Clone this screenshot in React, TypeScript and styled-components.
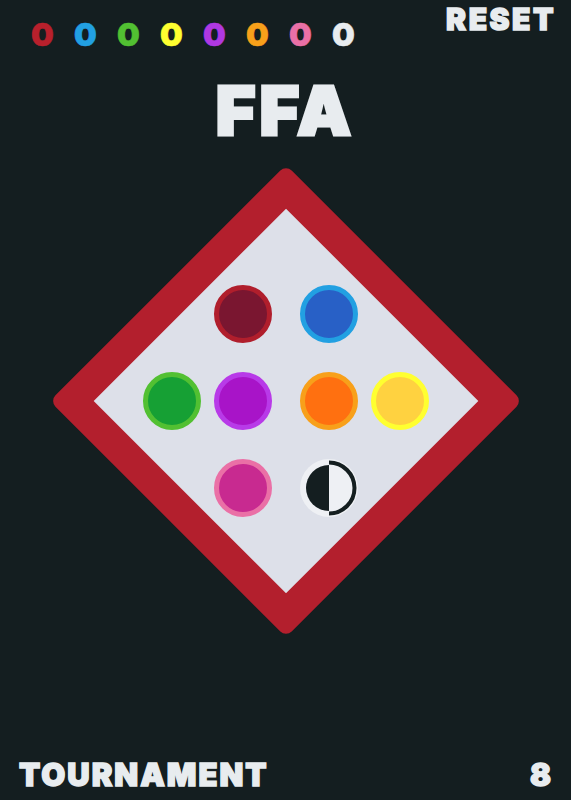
import React from 'react';
import styled, { createGlobalStyle } from 'styled-components';

const bg = '#141e20';
const red = '#b31f2d';
const paper = '#dde0e9';
const light = '#e8ecef';

const GlobalStyle = createGlobalStyle`
  html, body {
    margin: 0;
    padding: 0;
    background: ${bg};
  }
  body {
    font-family: Inter, 'Noto Sans', sans-serif;
    font-weight: 900;
  }
`;

const Screen = styled.div`
  height: 100vh;
  display: flex;
  flex-direction: column;
  color: ${light};
  overflow: hidden;
`;

/* heavier look than the installed fonts give by themselves */
const Heavy = styled.span<{ $w?: number }>`
  -webkit-text-stroke: ${(p) => p.$w ?? 1.4}px currentColor;
  paint-order: stroke fill;
`;

const TopBar = styled.div`
  display: flex;
  justify-content: space-between;
  align-items: flex-start;
  padding: 4px 15px 0 31px;
`;

const Scores = styled.div`
  display: flex;
  gap: 23px;
  margin-top: 15px;
`;

const Score = styled(Heavy)<{ $c: string }>`
  color: ${(p) => p.$c};
  font-size: 32px;
  line-height: 1;
  width: 20px;
  text-align: center;
`;

const Reset = styled.button`
  background: none;
  border: none;
  padding: 0;
  color: ${light};
  font: inherit;
  font-size: 30px;
  line-height: 1;
  letter-spacing: 2.5px;
  cursor: pointer;
`;

const Title = styled.h1`
  margin: 25px 0 0;
  text-align: center;
  font-size: 68px;
  font-weight: 900;
  line-height: 1;
  letter-spacing: 4px;
`;

const Board = styled.div`
  position: relative;
  width: 465px;
  height: 465px;
  margin: 24px auto 0;
  display: flex;
  flex-direction: column;
  justify-content: center;
  gap: 29px;

  &::before {
    content: '';
    position: absolute;
    left: 50%;
    top: 50%;
    width: 272px;
    height: 272px;
    margin: -167px 0 0 -167px;
    background: ${paper};
    border: 31px solid ${red};
    border-radius: 8px;
    transform: rotate(45deg);
  }
`;

const Row = styled.div`
  position: relative;
  display: flex;
  justify-content: center;
  gap: 28px;
`;

const Pair = styled.div`
  display: flex;
  gap: 13px;
`;

const Chip = styled.button<{ $fill: string; $ring: string }>`
  width: 58px;
  height: 58px;
  box-sizing: border-box;
  border-radius: 50%;
  border: 5px solid ${(p) => p.$ring};
  background: ${(p) => p.$fill};
  padding: 0;
  cursor: pointer;
`;

const ContrastChip = styled.button`
  width: 58px;
  height: 58px;
  padding: 0;
  border: none;
  background: none;
  cursor: pointer;
  display: flex;
`;

const BottomBar = styled.div`
  margin-top: auto;
  display: flex;
  justify-content: space-between;
  align-items: flex-end;
  padding: 0 18px 10px 19px;
  font-size: 31px;
  line-height: 1;
  letter-spacing: 2px;
`;

const scoreColors = ['#b8202c', '#22a0e2', '#52c032', '#ffff30', '#b038e2', '#f8a01a', '#ea70a6', light];

const chips = {
  red: { fill: '#7a1630', ring: '#b01e2c' },
  blue: { fill: '#2860c6', ring: '#22a0e2' },
  green: { fill: '#16a034', ring: '#52c032' },
  purple: { fill: '#a814c8', ring: '#b83ae8' },
  orange: { fill: '#ff7010', ring: '#f8a01a' },
  yellow: { fill: '#ffd240', ring: '#ffff30' },
  pink: { fill: '#c82a90', ring: '#ea70a6' },
};

function Contrast() {
  return (
    <ContrastChip aria-label="contrast">
      <svg width="58" height="58" viewBox="0 0 58 58">
        <circle cx="29" cy="29" r="29" fill="#eef0f4" />
        <path d="M29 6 A23 23 0 0 0 29 52 Z" fill="#141e20" />
        <path d="M29 3.5 A25.5 25.5 0 0 1 29 54.5" fill="none" stroke="#141e20" strokeWidth="4" />
      </svg>
    </ContrastChip>
  );
}

export default function App() {
  return (
    <>
      <GlobalStyle />
      <Screen>
        <TopBar>
          <Scores>
            {scoreColors.map((c, i) => (
              <Score key={i} $c={c} $w={0.6}>0</Score>
            ))}
          </Scores>
          <Reset>
            <Heavy>RESET</Heavy>
          </Reset>
        </TopBar>
        <Title>
          <Heavy $w={3}>FFA</Heavy>
        </Title>
        <Board>
          <Row>
            <Chip $fill={chips.red.fill} $ring={chips.red.ring} />
            <Chip $fill={chips.blue.fill} $ring={chips.blue.ring} />
          </Row>
          <Row>
            <Pair>
              <Chip $fill={chips.green.fill} $ring={chips.green.ring} />
              <Chip $fill={chips.purple.fill} $ring={chips.purple.ring} />
            </Pair>
            <Pair>
              <Chip $fill={chips.orange.fill} $ring={chips.orange.ring} />
              <Chip $fill={chips.yellow.fill} $ring={chips.yellow.ring} />
            </Pair>
          </Row>
          <Row>
            <Chip $fill={chips.pink.fill} $ring={chips.pink.ring} />
            <Contrast />
          </Row>
        </Board>
        <BottomBar>
          <Heavy>TOURNAMENT</Heavy>
          <Heavy>8</Heavy>
        </BottomBar>
      </Screen>
    </>
  );
}
